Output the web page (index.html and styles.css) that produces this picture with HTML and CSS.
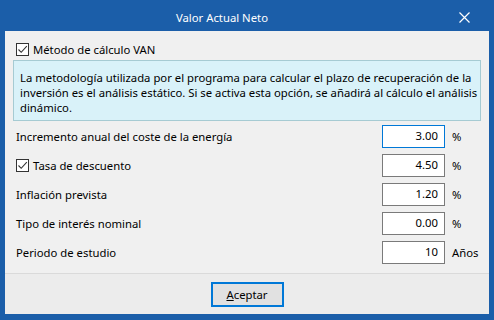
FILE: index.html
```html
<!DOCTYPE html>
<html lang="es">
<head>
  <meta charset="UTF-8">
  <title>Valor Actual Neto</title>
  <link rel="stylesheet" href="styles.css">
</head>
<body>
  <div class="ventana">
    <div class="titulo">
      <span class="titulo-texto">Valor Actual Neto</span>
      <span class="cerrar">
        <svg width="11" height="11" viewBox="0 0 11 11"><path d="M0.5 0.5 L10.5 10.5 M10.5 0.5 L0.5 10.5" stroke="#fff" stroke-width="1.2" fill="none"/></svg>
      </span>
    </div>
    <div class="cuerpo">
      <div class="principal">
        <label class="fila-check">
          <span class="check"><svg width="11" height="11" viewBox="0 0 11 11"><path d="M1.5 5.5 L4.2 8.3 L9.8 2.2" stroke="#333" stroke-width="1.1" fill="none"/></svg></span>
          Método de cálculo VAN
        </label>
        <p class="info">La metodología utilizada por el programa para calcular el plazo de recuperación de la<br>inversión es el análisis estático. Si se activa esta opción, se añadirá al cálculo el análisis<br>dinámico.</p>

        <div class="fila">
          <span class="etiqueta">Incremento anual del coste de la energía</span>
          <input class="valor activo" type="text" value="3.00">
          <span class="unidad">%</span>
        </div>
        <div class="fila">
          <span class="etiqueta"><span class="check"><svg width="11" height="11" viewBox="0 0 11 11"><path d="M1.5 5.5 L4.2 8.3 L9.8 2.2" stroke="#333" stroke-width="1.1" fill="none"/></svg></span>Tasa de descuento</span>
          <input class="valor" type="text" value="4.50">
          <span class="unidad">%</span>
        </div>
        <div class="fila">
          <span class="etiqueta">Inflación prevista</span>
          <input class="valor" type="text" value="1.20">
          <span class="unidad">%</span>
        </div>
        <div class="fila">
          <span class="etiqueta">Tipo de interés nominal</span>
          <input class="valor" type="text" value="0.00">
          <span class="unidad">%</span>
        </div>
        <div class="fila">
          <span class="etiqueta">Periodo de estudio</span>
          <input class="valor" type="text" value="10">
          <span class="unidad">Años</span>
        </div>
      </div>
      <div class="pie">
        <button class="boton"><u>A</u>ceptar</button>
      </div>
    </div>
  </div>
</body>
</html>
```

FILE: styles.css
```css
body {
  margin: 0;
  font-family: 'Noto Sans', sans-serif;
  font-size: 11.3px;
  color: #000;
}
.ventana {
  width: 494px;
  height: 320px;
  box-sizing: border-box;
  background: #1b5ea9;
  padding: 0 5px 6px;
  display: flex;
  flex-direction: column;
}
.titulo {
  height: 31px;
  flex-shrink: 0;
  display: flex;
  align-items: center;
  color: #fff;
}
.titulo-texto {
  flex: 1;
  text-align: center;
  padding-top: 4px;
}
.cerrar {
  width: 50px;
  display: flex;
  justify-content: center;
  padding-top: 4px;
}
.cuerpo {
  flex: 1;
  min-height: 0;
  background: #f0f0f0;
  display: flex;
  flex-direction: column;
}
.principal {
  flex: 1;
  padding: 8px 8px 0;
}
.check {
  width: 11px;
  height: 11px;
  border: 1px solid #333;
  background: #fff;
  display: inline-flex;
  margin-right: 4px;
}
.fila-check {
  height: 20px;
  display: flex;
  align-items: center;
  padding-left: 3px;
}
.info {
  margin: 1px 0 0;
  background: #d9f2f9;
  border: 1px solid #a6cbd3;
  padding: 9px 6px 5px;
  line-height: 15px;
  white-space: nowrap;
}
.fila {
  display: flex;
  align-items: center;
  height: 23px;
  margin-top: 6px;
}
.info + .fila {
  margin-top: 4px;
}
.etiqueta {
  flex: 1;
  padding-left: 3px;
  display: flex;
  align-items: center;
}
.valor {
  width: 63px;
  height: 23px;
  box-sizing: border-box;
  border: 1px solid #7a7a7a;
  padding: 0 6px 2px 0;
  text-align: right;
  font: inherit;
  color: #000;
  background: #fff;
}
.valor.activo {
  border-color: #0078d7;
}
.unidad {
  width: 29px;
  padding-left: 7px;
}
.pie {
  height: 41px;
  flex-shrink: 0;
  border-top: 1px solid #dadada;
  background: #ececec;
  display: flex;
  justify-content: center;
  padding-top: 8px;
  box-sizing: border-box;
}
.boton {
  width: 73px;
  height: 25px;
  border: 2px solid #0078d7;
  background: #e1e1e1;
  font: inherit;
  color: #000;
  padding: 0;
}
```
